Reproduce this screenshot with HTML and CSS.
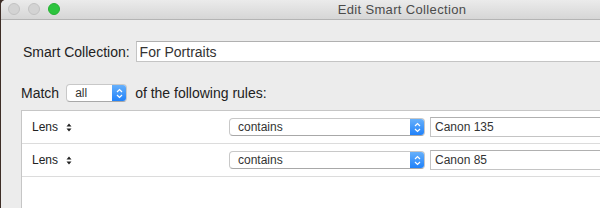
FILE: index.html
```html
<!DOCTYPE html>
<html>
<head>
<meta charset="utf-8">
<link rel="stylesheet" href="styles.css">
</head>
<body>
<div class="window">
  <div class="titlebar">
    <div class="lights">
      <span class="light grey"></span>
      <span class="light grey"></span>
      <span class="light green"></span>
    </div>
    <div class="title">Edit Smart Collection</div>
  </div>
  <div class="content">
    <div class="name-row">
      <span class="label">Smart Collection:</span>
      <div class="field big">For Portraits</div>
    </div>
    <div class="match-row">
      <span class="label">Match</span>
      <div class="popup small">
        <span class="popup-text">all</span>
        <span class="popup-btn">
          <svg width="7" height="11" viewBox="0 0 7 11"><path d="M1 4 L3.5 1.5 L6 4 M1 7 L3.5 9.5 L6 7" fill="none" stroke="#fff" stroke-width="1.2"/></svg>
        </span>
      </div>
      <span class="label">of the following rules:</span>
    </div>
    <div class="rules">
      <div class="rule">
        <div class="attr">
          <span>Lens</span>
          <svg class="stepper" width="6" height="9" viewBox="0 0 6 9"><path d="M0.5 3.5 L3 0.5 L5.5 3.5 Z M0.5 5.5 L3 8.5 L5.5 5.5 Z" fill="#222"/></svg>
        </div>
        <div class="popup wide">
          <span class="popup-text">contains</span>
          <span class="popup-btn">
            <svg width="7" height="11" viewBox="0 0 7 11"><path d="M1 4 L3.5 1.5 L6 4 M1 7 L3.5 9.5 L6 7" fill="none" stroke="#fff" stroke-width="1.2"/></svg>
          </span>
        </div>
        <div class="field value">Canon 135</div>
      </div>
      <div class="rule">
        <div class="attr">
          <span>Lens</span>
          <svg class="stepper" width="6" height="9" viewBox="0 0 6 9"><path d="M0.5 3.5 L3 0.5 L5.5 3.5 Z M0.5 5.5 L3 8.5 L5.5 5.5 Z" fill="#222"/></svg>
        </div>
        <div class="popup wide">
          <span class="popup-text">contains</span>
          <span class="popup-btn">
            <svg width="7" height="11" viewBox="0 0 7 11"><path d="M1 4 L3.5 1.5 L6 4 M1 7 L3.5 9.5 L6 7" fill="none" stroke="#fff" stroke-width="1.2"/></svg>
          </span>
        </div>
        <div class="field value">Canon 85</div>
      </div>
    </div>
  </div>
</div>
</body>
</html>
```

FILE: styles.css
```css
html, body {
  margin: 0;
  padding: 0;
}
body {
  width: 600px;
  height: 208px;
  overflow: hidden;
  background: #3e2e27;
  font-family: "Liberation Sans", Arial, sans-serif;
  color: #222;
}
.window {
  margin-left: 1px;
  width: 802px;
  height: 260px;
  background: #ececec;
  border-top-left-radius: 5px;
  overflow: hidden;
}
.titlebar {
  position: relative;
  height: 19px;
  border-bottom: 1px solid #b4b4b4;
  background: linear-gradient(#ebebeb, #d6d6d6);
  display: flex;
  align-items: center;
  justify-content: center;
}
.lights {
  position: absolute;
  left: 7px;
  top: 3px;
  display: flex;
  gap: 8px;
}
.light {
  width: 12px;
  height: 12px;
  border-radius: 50%;
  box-sizing: border-box;
}
.light.grey {
  background: #d3d3d3;
  border: 1px solid #c2c2c2;
}
.light.green {
  background: #2cc43e;
  border: 1px solid #25b134;
}
.title {
  font-size: 13px;
  letter-spacing: 0.35px;
  color: #4b4b4b;
}
.content {
  padding: 21px 0 0 20px;
}
.label {
  font-size: 14px;
  color: #222;
}
.name-row {
  display: flex;
  align-items: center;
  padding-left: 2px;
  gap: 6px;
}
.field {
  box-sizing: border-box;
  background: #fff;
  border: 1px solid #c4c4c4;
  border-top-color: #b0b0b0;
  color: #333;
  display: flex;
  align-items: center;
}
.field.big {
  flex: 1;
  height: 21px;
  font-size: 14px;
  padding-left: 3px;
}
.match-row {
  display: flex;
  align-items: center;
  margin-top: 22px;
  height: 18px;
}
.match-row .popup {
  margin: 0 8px 0 7px;
}
.popup {
  box-sizing: border-box;
  display: flex;
  align-items: stretch;
  height: 18px;
  background: #fff;
  border: 1px solid #c8c8c8;
  border-bottom-color: #a8a8a8;
  border-radius: 4px;
  overflow: hidden;
  font-size: 12px;
  color: #333;
}
.popup.small {
  width: 61px;
}
.popup.wide {
  width: 196px;
}
.popup-text {
  flex: 1;
  display: flex;
  align-items: center;
  padding-left: 8px;
}
.popup-btn {
  width: 15px;
  margin: -1px -1px -1px 0;
  background: linear-gradient(#6bb3fb, #1c7ffa);
  border-radius: 0 4px 4px 0;
  display: flex;
  align-items: center;
  justify-content: center;
}
.rules {
  margin-top: 8px;
  background: #fff;
  border: 1px solid #c6c6c6;
  height: 200px;
}
.rule {
  display: flex;
  align-items: center;
  height: 32px;
  border-bottom: 1px solid #dcdcdc;
  font-size: 12px;
}
.attr {
  box-sizing: border-box;
  width: 207px;
  padding-left: 10px;
  display: flex;
  align-items: center;
  gap: 8px;
  color: #222;
}
.stepper {
  display: block;
}
.field.value {
  flex: 1;
  height: 20px;
  margin-left: 5px;
  padding-left: 4px;
  font-size: 12px;
}
```
